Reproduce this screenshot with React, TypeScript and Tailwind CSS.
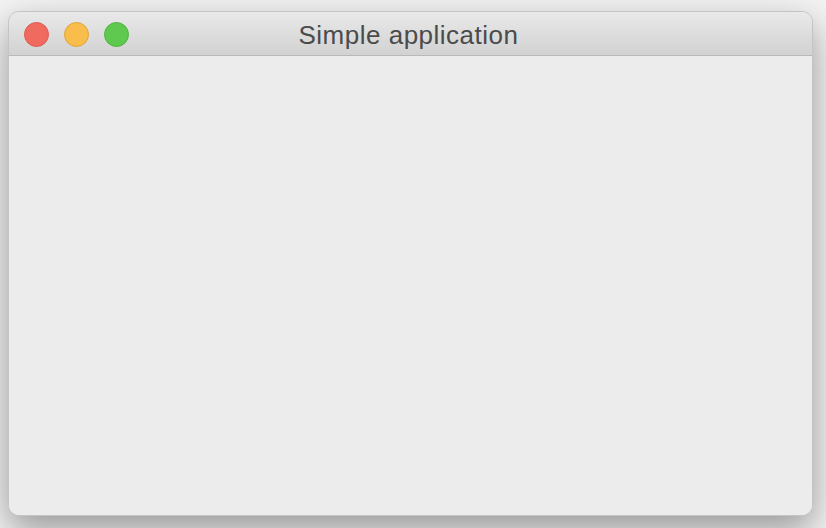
import { FC } from "react";

const TrafficLight: FC<{ fill: string; border: string }> = ({ fill, border }) => {
  return (
    <span
      className={`block w-[25px] h-[25px] rounded-full border ${fill} ${border}`}
    ></span>
  );
};

const App: FC = () => {
  return (
    <div className="w-[826px] h-[528px] overflow-hidden bg-[#f3f3f3] pt-[11px] pl-[8px] font-['Helvetica_Neue','Liberation_Sans',Arial,sans-serif]">
      <div className="w-[805px] h-[505px] flex flex-col rounded-[11px] overflow-hidden border border-[#c4c4c4] bg-[#ececec] shadow-[0_14px_36px_rgba(0,0,0,0.38)]">
        {/* title bar */}
        <div className="relative h-[44px] shrink-0 flex items-center bg-gradient-to-b from-[#e9e9e9] to-[#d2d2d2] border-b border-[#b9b9b9]">
          <div className="flex items-center gap-[15px] pl-[15px] pt-[1px]">
            <TrafficLight fill="bg-[#f06a60]" border="border-[#de5a50]" />
            <TrafficLight fill="bg-[#f8bd4a]" border="border-[#e0a43a]" />
            <TrafficLight fill="bg-[#5fc94f]" border="border-[#4fb33f]" />
          </div>
          <div className="absolute inset-0 flex items-center justify-center pr-[4px] pointer-events-none">
            <span className="text-[26px] leading-none text-[#4b4b4b] tracking-[0.5px] pt-[2px]">
              Simple application
            </span>
          </div>
        </div>
        {/* content */}
        <div className="flex-1 bg-[#ececec]"></div>
      </div>
    </div>
  );
};

export default App;
